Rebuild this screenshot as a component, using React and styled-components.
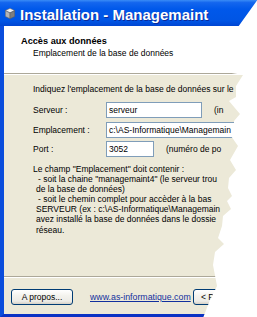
import React from "react";
import styled, { createGlobalStyle } from "styled-components";

const Global = createGlobalStyle`
  html, body { margin: 0; padding: 0; background: #fff; }
  body { font-family: "Liberation Sans", Arial, sans-serif; }
`;

const Page = styled.div`
  position: relative;
  width: 257px;
  height: 317px;
  overflow: hidden;
  background: #fff;
`;

const Window = styled.div`
  width: 330px;
  height: 317px;
  display: flex;
  flex-direction: column;
`;

const TitleBar = styled.div`
  height: 26px;
  flex-shrink: 0;
  display: flex;
  align-items: center;
  gap: 5px;
  padding-left: 5px;
  box-sizing: border-box;
  background: linear-gradient(
    to bottom,
    #3a8cf6 0%,
    #1466ee 10%,
    #0058ea 35%,
    #0055e4 80%,
    #0046d2 100%
  );
`;

const TitleText = styled.span`
  margin-top: 3px;
  font-family: "Liberation Sans", Arial, sans-serif;
  font-weight: bold;
  font-size: 15px;
  color: #fff;
  white-space: nowrap;
  text-shadow: 1px 1px 0 #0b2a9a;
`;

const Frame = styled.div`
  flex: 1;
  display: flex;
  flex-direction: column;
  border-left: 4px solid #0a4ddc;
  border-bottom: 3px solid #0a32c4;
  font-size: 8.5px;
  color: #000;
  min-height: 0;
`;

const Header = styled.div`
  height: 47px;
  box-sizing: border-box;
  background: #fff;
  padding: 9.6px 0 0 17px;
  display: flex;
  flex-direction: column;
`;

const HeaderTitle = styled.div`
  font-weight: bold;
  font-size: 9.2px;
  line-height: 11px;
  white-space: nowrap;
`;

const HeaderSub = styled.div`
  margin-top: 1px;
  padding-left: 12px;
  line-height: 10px;
  white-space: nowrap;
`;

const Etched = styled.div`
  height: 0;
  border-top: 1px solid #aca899;
  border-bottom: 1px solid #fff;
`;

const Body = styled.div`
  flex: 1;
  background: #ece9d8;
  padding: 9px 0 0 29px;
  display: flex;
  flex-direction: column;
  min-height: 0;
`;

const Line = styled.div`
  line-height: ${(p) => p.$lh || "10px"};
  white-space: nowrap;
  padding-left: ${(p) => p.$indent || 0}px;
`;

const Form = styled.div`
  margin-top: 8px;
  display: flex;
  flex-direction: column;
  gap: 3.5px;
`;

const Row = styled.div`
  display: flex;
  align-items: center;
  height: 16px;
  white-space: nowrap;
`;

const Label = styled.span`
  width: 73px;
  flex-shrink: 0;
`;

const Field = styled.div`
  width: ${(p) => p.$w}px;
  height: 16px;
  box-sizing: border-box;
  flex-shrink: 0;
  border: 1px solid #7f9db9;
  background: #fff;
  padding-left: 2px;
  display: flex;
  align-items: center;
  white-space: nowrap;
  overflow: hidden;
`;

const Hint = styled.span`
  margin-left: 12px;
`;

const Notes = styled.div`
  margin-top: 7px;
  display: flex;
  flex-direction: column;
`;

const Footer = styled.div`
  height: 36px;
  box-sizing: border-box;
  background: #ece9d8;
  padding: 11px 0 0 7px;
  display: flex;
  align-items: flex-start;
`;

const Button = styled.div`
  width: ${(p) => p.$w}px;
  height: 16px;
  box-sizing: border-box;
  flex-shrink: 0;
  border: 1px solid #003c74;
  border-radius: 3px;
  background: linear-gradient(to bottom, #ffffff 0%, #f4f3ee 40%, #ecebe6 80%, #d6d0c5 100%);
  display: flex;
  align-items: center;
  justify-content: ${(p) => (p.$left ? "flex-start" : "center")};
  padding-left: ${(p) => (p.$left ? 7 : 0)}px;
  white-space: nowrap;
  margin-left: ${(p) => p.$ml || 0}px;
`;

const Link = styled.a`
  margin-left: 17px;
  margin-top: 2px;
  width: 101px;
  flex-shrink: 0;
  font-size: 8.8px;
  line-height: 12px;
  color: #12309e;
  text-decoration: underline;
  white-space: nowrap;
`;

const Tear = styled.svg`
  position: absolute;
  left: 0;
  top: 0;
  width: 257px;
  height: 317px;
  pointer-events: none;
`;

const tearPoints = [
  [258, -1], [238, 27], [232, 60], [226, 72], [243, 75], [236, 86], [236, 97],
  [229, 101], [240, 114], [234, 121], [234, 130], [231, 136], [238, 146],
  [230, 160], [236, 170], [229, 178], [228, 188], [232, 196], [227, 201],
  [231, 209], [223, 216], [222, 226], [218, 238], [224, 244], [215, 252],
  [213, 265], [217, 286], [210, 300], [203, 318], [260, 318], [260, -1],
]
  .map((p) => p.join(","))
  .join(" ");

function CubeIcon() {
  return (
    <svg width="10" height="11" viewBox="0 0 10 11" style={{ flexShrink: 0 }}>
      <polygon points="5,0.3 9.7,2.6 5,4.9 0.3,2.6" fill="#eeeeee" stroke="#5a5a5a" strokeWidth="0.5" />
      <polygon points="0.3,2.6 5,4.9 5,10.7 0.3,8.4" fill="#b4b4b4" stroke="#5a5a5a" strokeWidth="0.5" />
      <polygon points="5,4.9 9.7,2.6 9.7,8.4 5,10.7" fill="#7e7e7e" stroke="#5a5a5a" strokeWidth="0.5" />
    </svg>
  );
}

export default function App() {
  return (
    <>
      <Global />
      <Page>
        <Window>
          <TitleBar>
            <CubeIcon />
            <TitleText>Installation - Managemaint</TitleText>
          </TitleBar>
          <Frame>
            <Header>
              <HeaderTitle>Accès aux données</HeaderTitle>
              <HeaderSub>Emplacement de la base de données</HeaderSub>
            </Header>
            <Etched />
            <Body>
              <Line>Indiquez l'emplacement de la base de données sur le</Line>
              <Form>
                <Row>
                  <Label>Serveur :</Label>
                  <Field $w={96}>serveur</Field>
                  <Hint>(in</Hint>
                </Row>
                <Row>
                  <Label>Emplacement :</Label>
                  <Field $w={200}>c:\AS-Informatique\Managemain</Field>
                </Row>
                <Row>
                  <Label>Port :</Label>
                  <Field $w={48}>3052</Field>
                  <Hint>(numéro de po</Hint>
                </Row>
              </Form>
              <Notes>
                <Line $lh="10.1px">Le champ "Emplacement" doit contenir :</Line>
                <Line $lh="10.1px" $indent={5}>- soit la chaine "managemaint4" (le serveur trou</Line>
                <Line $lh="10.1px" $indent={3}>de la base de données)</Line>
                <Line $lh="10.1px" $indent={5}>- soit le chemin complet pour accèder à la bas</Line>
                <Line $lh="10.1px" $indent={3}>SERVEUR (ex : c:\AS-Informatique\Managemain</Line>
                <Line $lh="10.1px" $indent={3}>avez installé la base de données dans le dossie</Line>
                <Line $lh="10.1px" $indent={3}>réseau.</Line>
              </Notes>
            </Body>
            <Etched />
            <Footer>
              <Button $w={62}>A propos...</Button>
              <Link href="#">www.as-informatique.com</Link>
              <Button $w={75} $ml={2} $left>&lt; P</Button>
            </Footer>
          </Frame>
        </Window>
        <Tear viewBox="0 0 257 317">
          <polygon points={tearPoints} fill="#ffffff" />
        </Tear>
      </Page>
    </>
  );
}
